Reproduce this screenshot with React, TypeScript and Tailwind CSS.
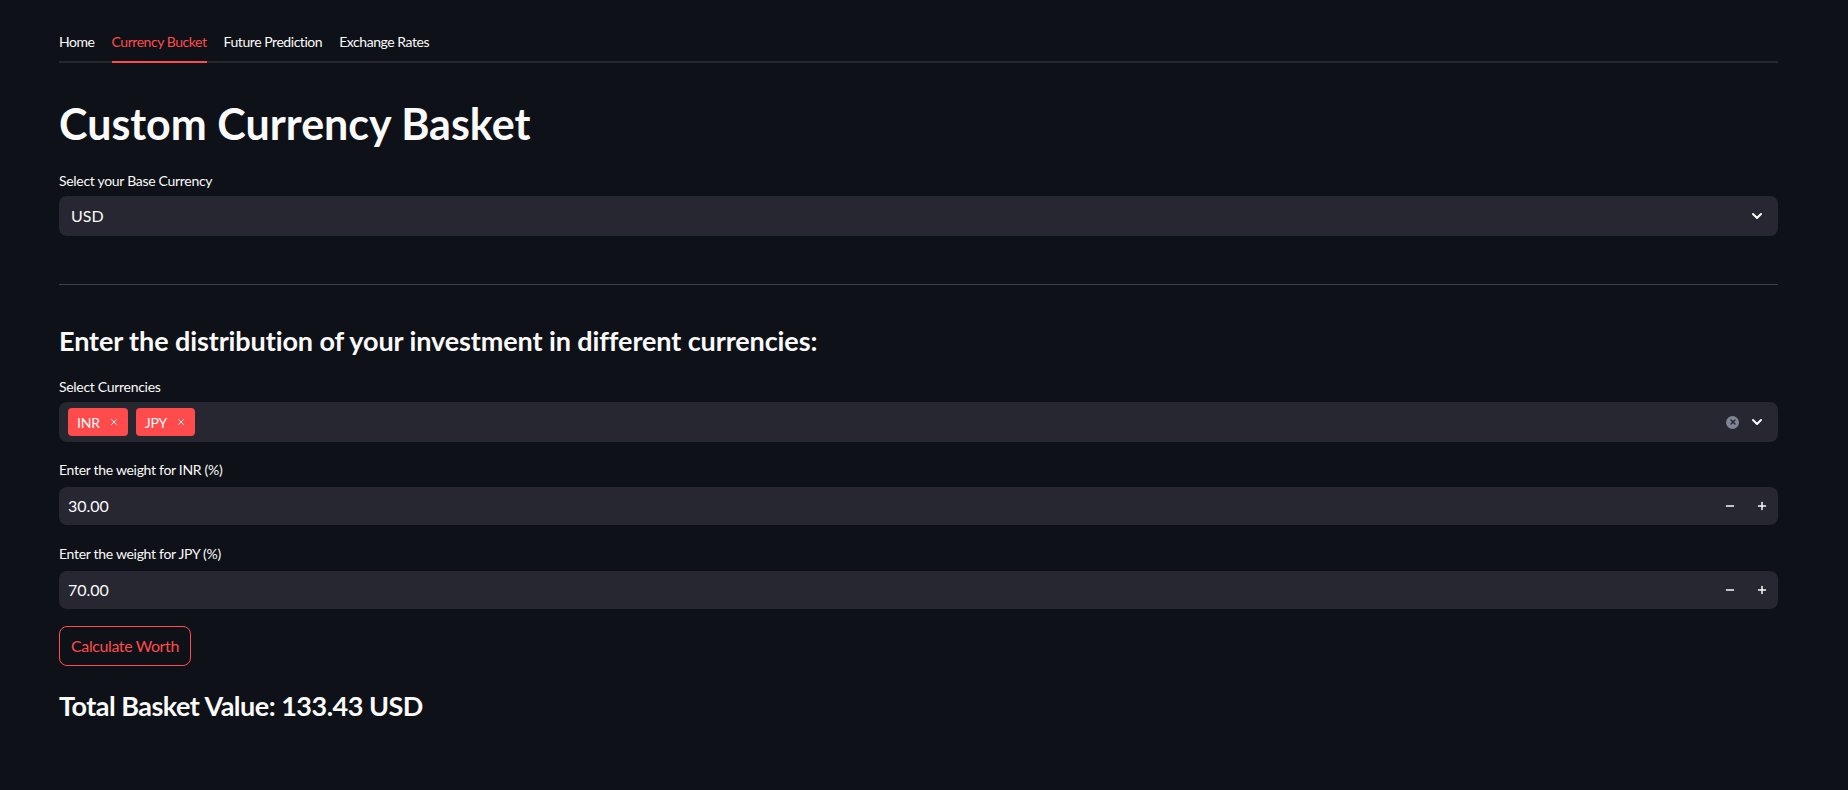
import { ChevronDown, Minus, Plus, X } from 'lucide-react';

const tabs = ['Home', 'Currency Bucket', 'Future Prediction', 'Exchange Rates'];

function Label({ text, className = '' }: { text: string; className?: string }) {
  return <div className={`text-[14px] leading-[20px] tracking-[-0.3px] text-[#fafafa] ${className}`}>{text}</div>;
}

function NumberInput({ value }: { value: string }) {
  return (
    <div className="mt-[7px] flex h-[38px] items-center rounded-[8px] bg-[#262730]">
      <span className="flex-1 pl-[9px] text-[16px]">{value}</span>
      <span className="flex h-full w-[32px] items-center justify-center">
        <Minus className="h-[12px] w-[12px]" strokeWidth={3} />
      </span>
      <span className="flex h-full w-[32px] items-center justify-center">
        <Plus className="h-[12px] w-[12px]" strokeWidth={3} />
      </span>
    </div>
  );
}

function Chip({ text }: { text: string }) {
  return (
    <span className="flex h-[28px] items-center gap-[9px] rounded-[4px] bg-[#ff4b4b] pl-[9px] pr-[9px] text-[14px] tracking-[-0.2px] text-white">
      {text}
      <X className="h-[10px] w-[10px]" strokeWidth={2.2} />
    </span>
  );
}

export default function App() {
  return (
    <div className="min-h-[790px] bg-[#0e1117] pl-[59px] pr-[70px] pt-[21px] font-['Lato',sans-serif] text-[#fafafa]">
      {/* Tabs */}
      <div className="flex gap-[17px] border-b-2 border-[#262730]">
        {tabs.map((t) => (
          <div
            key={t}
            className={`relative flex h-[40px] items-center text-[14px] tracking-[-0.45px] ${t === 'Currency Bucket' ? 'text-[#ff4b4b]' : 'text-[#fafafa]'}`}
          >
            {t}
            {t === 'Currency Bucket' && (
              <span className="absolute -bottom-[2px] left-0 right-0 h-[2px] bg-[#ff4b4b]" />
            )}
          </div>
        ))}
      </div>

      <h1 className="mt-[36px] text-[43px] font-bold leading-[50px]">Custom Currency Basket</h1>

      <Label text="Select your Base Currency" className="mt-[22px]" />
      <div className="mt-[5px] flex h-[40px] items-center rounded-[8px] bg-[#262730] pl-[12px] pr-[13px]">
        <span className="flex-1 text-[16px]">USD</span>
        <ChevronDown className="h-[16px] w-[16px]" strokeWidth={3} />
      </div>

      <hr className="mt-[48px] border-0 border-t border-[#3d4046]" />

      <h3 className="mt-[38px] text-[27px] font-bold leading-[36px] tracking-[-0.1px]">
        Enter the distribution of your investment in different currencies:
      </h3>

      <Label text="Select Currencies" className="mt-[18px]" />
      <div className="mt-[5px] flex h-[40px] items-center rounded-[8px] bg-[#262730] pl-[9px] pr-[13px]">
        <div className="flex flex-1 gap-[8px]">
          <Chip text="INR" />
          <Chip text="JPY" />
        </div>
        <span className="mr-[10px] flex h-[13px] w-[13px] items-center justify-center rounded-full bg-[#808495]">
          <X className="h-[8px] w-[8px] text-[#262730]" strokeWidth={4} />
        </span>
        <ChevronDown className="h-[16px] w-[16px]" strokeWidth={3} />
      </div>

      <Label text="Enter the weight for INR (%)" className="mt-[18px]" />
      <NumberInput value="30.00" />

      <Label text="Enter the weight for JPY (%)" className="mt-[19px]" />
      <NumberInput value="70.00" />

      <button className="mt-[17px] flex h-[40px] w-[132px] items-center justify-center rounded-[8px] border border-[#ff4b4b] text-[16px] tracking-[-0.4px] text-[#ff4b4b]">
        Calculate Worth
      </button>

      <h3 className="mt-[22px] text-[27px] font-bold leading-[36px] tracking-[-0.5px]">Total Basket Value: 133.43 USD</h3>
    </div>
  );
}
